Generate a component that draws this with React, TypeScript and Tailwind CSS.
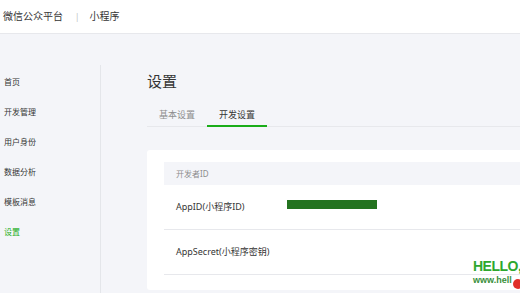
import React from 'react';

const navItems = ['首页', '开发管理', '用户身份', '数据分析', '模板消息', '设置'];

export default function App() {
    return (
        <div
            className="relative w-[520px] h-[293px] overflow-hidden bg-[#f4f5f9] text-[#353535]"
            style={{ fontFamily: '"Noto Sans", "Noto Sans CJK SC", sans-serif' }}
        >
            {/* top bar */}
            <div className="h-[34px] bg-white border-b border-[#e7e8ec] flex items-center pl-[3px] text-[10px] text-[#353535]">
                <span>微信公众平台</span>
                <span className="ml-[12px] mr-[10px] text-[#bbb] text-[8px]">|</span>
                <span>小程序</span>
            </div>

            <div className="flex">
                {/* sidebar */}
                <div className="w-[101px] shrink-0 pt-[31px]">
                    <div className="border-r border-[#e4e6ea] h-[240px]">
                        <ul className="flex flex-col gap-[14px] pl-[4px] pt-[9px] text-[8px] leading-[16px]">
                            {navItems.map((item) => (
                                <li key={item} className={item === '设置' ? 'text-[#1aad19]' : ''}>
                                    {item}
                                </li>
                            ))}
                        </ul>
                    </div>
                </div>

                {/* main */}
                <div className="w-[420px] shrink-0 pl-[46px] pt-[37px]">
                    <h1 className="text-[15px] leading-[20px] text-[#353535]">设置</h1>
                    <div className="mt-[18px] flex border-b border-[#e7e8ec] text-[9px] leading-[12px]">
                        <div className="px-[12px] pb-[5px] text-[#8d8d8d]">基本设置</div>
                        <div className="px-[12px] pb-[4px] text-[#353535] border-b-2 border-[#1aad19] -mb-[1px]">开发设置</div>
                    </div>

                    <div className="mt-[23px] w-[420px] bg-white rounded-[3px] px-[17px] pt-[12px] pb-[12px] h-[140px]">
                        <div className="h-[23px] bg-[#f4f5f9] flex items-center pl-[12px] text-[8px] text-[#8d8d8d]">
                            开发者ID
                        </div>
                        <div className="h-[45px] border-b border-[#e7e8ec] flex items-center pl-[12px] text-[9px]">
                            <span className="w-[111px]">AppID(小程序ID)</span>
                            <span className="w-[90px] h-[9px] bg-[#23731f] -mt-[5px]" />
                        </div>
                        <div className="h-[45px] border-b border-[#e7e8ec] flex items-center pl-[12px] text-[9px]">
                            AppSecret(小程序密钥)
                        </div>
                    </div>
                </div>
            </div>

            {/* watermark overlay */}
            <div className="absolute left-[473px] top-[259px]" style={{ fontFamily: '"Liberation Sans", sans-serif' }}>
                <div className="text-[14px] leading-[14px] font-bold text-[#2ea82e] tracking-[-0.5px]">
                    HELLO,
                </div>
                <div className="mt-[2px] flex items-start text-[9px] leading-[10px] font-bold text-[#3a8f3a]">
                    <span>www.hell</span>
                    <span className="ml-[1px] mt-[4px] w-[10px] h-[10px] rounded-full bg-[#e0302a]" />
                </div>
            </div>
        </div>
    );
}
